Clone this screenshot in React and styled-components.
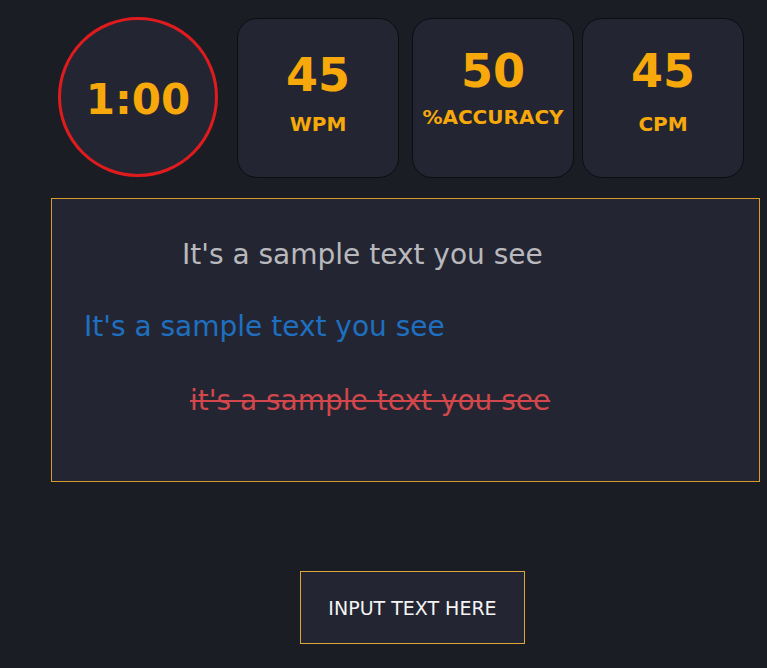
import styled, { createGlobalStyle } from "styled-components";

const GlobalStyle = createGlobalStyle`
  body {
    margin: 0;
    background: #1b1d25;
    font-family: "DejaVu Sans", Verdana, sans-serif;
  }
`;

const stats = [
  { id: "wpm", value: 45, label: "WPM", gap: 19, valueTop: 33, labelTop: 15 },
  { id: "acc", value: 50, label: "%ACCURACY", gap: 13, valueTop: 29, labelTop: 12 },
  { id: "cpm", value: 45, label: "CPM", gap: 8, valueTop: 29, labelTop: 19 },
];

const lines = [
  { id: 1, text: "It's a sample text you see", color: "#b9b9bd", indent: 130, top: 38 },
  { id: 2, text: "It's a sample text you see", color: "#1f6fc1", indent: 32, top: 38 },
  { id: 3, text: "it's a sample text you see", color: "#d2474b", indent: 138, top: 40, struck: true },
];

const App = () => {
  return (
    <Page>
      <GlobalStyle />
      <StatsRow>
        <Timer>1:00</Timer>
        {stats.map((s) => (
          <StatCard key={s.id} $gap={s.gap}>
            <StatValue $top={s.valueTop}>{s.value}</StatValue>
            <StatLabel $top={s.labelTop}>{s.label}</StatLabel>
          </StatCard>
        ))}
      </StatsRow>
      <TextBox>
        {lines.map((l) => (
          <SampleLine
            key={l.id}
            $color={l.color}
            $indent={l.indent}
            $top={l.top}
            $struck={l.struck}
          >
            {l.text}
          </SampleLine>
        ))}
      </TextBox>
      <InputButton>INPUT TEXT HERE</InputButton>
    </Page>
  );
};

const Page = styled.div`
  padding: 17px 0 24px;
`;

const StatsRow = styled.div`
  display: flex;
  align-items: flex-start;
  padding-left: 58px;
`;

const Timer = styled.div`
  box-sizing: border-box;
  width: 160px;
  height: 160px;
  border: 3px solid #e01b1e;
  border-radius: 50%;
  background: #232632;
  display: flex;
  align-items: center;
  justify-content: center;
  color: #f7a90b;
  font-weight: bold;
  font-size: 42px;
  padding-top: 4px;
`;

const StatCard = styled.div`
  box-sizing: border-box;
  width: 162px;
  height: 160px;
  margin-left: ${(p) => p.$gap}px;
  margin-top: 1px;
  border: 1px solid #0c0d11;
  border-radius: 20px;
  background: #232632;
  display: flex;
  flex-direction: column;
  align-items: center;
  color: #f7a90b;
  font-weight: bold;
`;

const StatValue = styled.div`
  margin-top: ${(p) => p.$top}px;
  font-size: 46px;
  line-height: 46px;
`;

const StatLabel = styled.div`
  margin-top: ${(p) => p.$top}px;
  font-size: 20px;
  line-height: 22px;
`;

const TextBox = styled.div`
  box-sizing: border-box;
  width: 709px;
  height: 284px;
  margin: 20px 0 0 51px;
  border: 1px solid #d89b2b;
  background: #232632;
  padding-top: 1px;
`;

const SampleLine = styled.div`
  margin: ${(p) => p.$top}px 0 0 ${(p) => p.$indent}px;
  color: ${(p) => p.$color};
  font-family: "Comic Sans MS", "DejaVu Sans", sans-serif;
  font-size: 28px;
  line-height: 34px;
  text-decoration: ${(p) => (p.$struck ? "line-through" : "none")};
  text-decoration-thickness: 2px;
`;

const InputButton = styled.button`
  display: block;
  box-sizing: border-box;
  width: 225px;
  height: 73px;
  margin: 89px 0 0 300px;
  border: 1px solid #e0a53a;
  background: #232632;
  color: #f4f4f4;
  font-family: "DejaVu Sans", Tahoma, sans-serif;
  font-size: 19px;
  cursor: pointer;
`;

export default App;
